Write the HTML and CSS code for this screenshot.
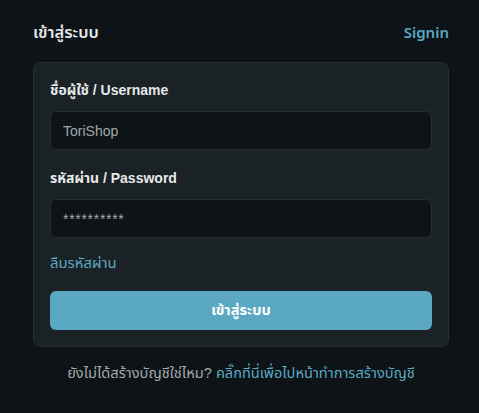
FILE: index.html
```html
<!DOCTYPE html>
<html lang="th">
<head>
    <meta charset="UTF-8">
    <meta name="viewport" content="width=device-width, initial-scale=1.0">
    <title>เข้าสู่ระบบ</title>
    <link rel="stylesheet" href="styles.css">
</head>
<body>
    <div class="wrapper">
        <div class="header">
            <h1>เข้าสู่ระบบ</h1>
            <a href="#" class="signin">Signin</a>
        </div>

        <form class="card" onsubmit="return false;">
            <div class="input-group">
                <label for="username">ชื่อผู้ใช้ / Username</label>
                <input type="text" id="username" value="ToriShop">
            </div>

            <div class="input-group">
                <label for="password">รหัสผ่าน / Password</label>
                <input type="text" id="password" class="secret" value="**********">
            </div>

            <a href="#" class="forgot">ลืมรหัสผ่าน</a>

            <button type="submit">เข้าสู่ระบบ</button>
        </form>

        <p class="register">ยังไม่ได้สร้างบัญชีใช่ไหม? <a href="#">คลิ๊กที่นี่เพื่อไปหน้าทำการสร้างบัญชี</a></p>
    </div>
</body>
</html>
```

FILE: styles.css
```css
:root {
    --bg: #0d1316;
    --card: #1b2226;
    --border: #262e33;
    --text: #e6e8ea;
    --muted: #a3a9ad;
    --accent: #5ba8c2;
}

* {
    margin: 0;
    padding: 0;
    box-sizing: border-box;
    font-family: 'Liberation Sans', 'Noto Sans Thai', 'Noto Sans Thai UI', 'Noto Sans', sans-serif;
}

body {
    background-color: var(--bg);
    color: var(--text);
    min-height: 100vh;
}

.wrapper {
    width: 416px;
    margin-left: 33px;
    padding-top: 20px;
}

.header {
    display: flex;
    justify-content: space-between;
    align-items: center;
    height: 24px;
    margin-bottom: 18px;
}

h1 {
    font-size: 16.5px;
    font-weight: 600;
    color: var(--text);
}

.signin {
    font-family: 'Noto Sans', sans-serif;
    font-size: 15px;
    font-weight: 600;
    color: var(--accent);
    text-decoration: none;
}

.card {
    background-color: var(--card);
    border: 1px solid var(--border);
    border-radius: 8px;
    padding: 17px 16px 16px;
    display: flex;
    flex-direction: column;
}

.input-group {
    margin-bottom: 18px;
}

label {
    display: block;
    font-size: 14px;
    line-height: 20px;
    font-weight: 700;
    color: var(--text);
    margin-bottom: 11px;
}

input {
    width: 100%;
    height: 39px;
    background-color: var(--bg);
    border: 1px solid var(--border);
    border-radius: 6px;
    padding: 0 12px;
    font-size: 14px;
    color: var(--muted);
    outline: none;
}

input.secret {
    letter-spacing: 0.7px;
}

.forgot {
    font-size: 14.8px;
    line-height: 20px;
    color: var(--accent);
    text-decoration: none;
    margin-top: -3px;
    margin-bottom: 18px;
    align-self: flex-start;
}

button {
    height: 39px;
    background-color: var(--accent);
    color: #ffffff;
    border: none;
    border-radius: 6px;
    font-size: 14.6px;
    font-weight: 700;
    cursor: pointer;
}

.register {
    text-align: center;
    font-size: 14.6px;
    line-height: 20px;
    color: var(--muted);
    margin-top: 16px;
}

.register a {
    color: var(--accent);
    text-decoration: none;
}
```
